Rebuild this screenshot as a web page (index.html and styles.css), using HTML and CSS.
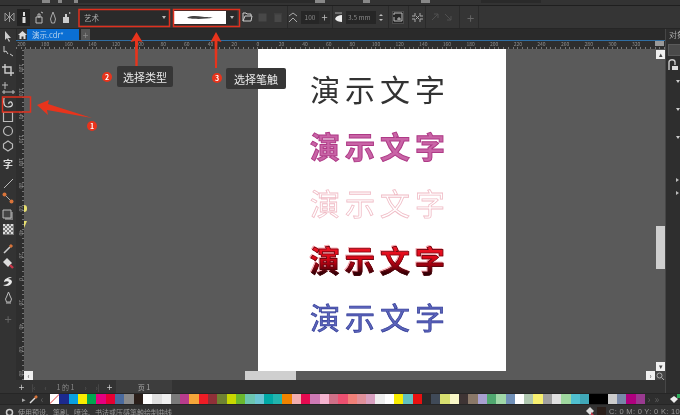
FILE: index.html
```html
<!DOCTYPE html>
<html lang="zh">
<head>
<meta charset="utf-8">
<title>演示.cdr</title>
<link rel="stylesheet" href="styles.css">
</head>
<body>
<div class="app">
  <div class="topstrip">
    <i class="frag lit w8"></i><i class="w8"></i><i class="frag lit w4"></i><i class="w12"></i><i class="frag lit w4"></i><i class="frag w237"></i><i class="frag lit w10"></i><i class="w38"></i><i class="frag lit w7"></i><i class="w51"></i><i class="frag lit w9"></i><i class="w51"></i><i class="frag w60"></i>
  </div>

  <div class="propbar">
    <svg class="pi" width="11" height="12" viewBox="0 0 11 12"><path d="M1 2v8l4-4zM10 2v8L6 6zM5.500 1v10" fill="none" stroke="#999"/></svg>
    <span class="activebtn ml2"><svg width="6" height="13" viewBox="0 0 6 13"><path d="M2 1h2v4H2zM1.500 6h3v6h-3z" fill="#ddd"/></svg></span>
    <svg class="pi ml5" width="9" height="13" viewBox="0 0 9 13"><path d="M1 6h6v6H1zM3 3h2v3H3zM6 1l2 1" fill="none" stroke="#bbb"/></svg>
    <svg class="pi ml5" width="8" height="13" viewBox="0 0 8 13"><path d="M4 1l1.500 4 1 3-1 4h-3l-1-4 1-3z" fill="none" stroke="#aaa"/></svg>
    <svg class="pi ml5" width="10" height="13" viewBox="0 0 10 13"><path d="M1 6h6v6H1zM3 3h2v3H3z" fill="#ccc"/><path d="M7 1l2 1-2 1z" fill="#ccc"/></svg>
    <div class="combo type ml7"><span>艺术</span><i class="caret"></i></div>
    <div class="combo stroke ml4">
      <span class="swatch"><svg width="26" height="5" viewBox="0 0 30 5"><path d="M0 2.500C6 0 12 1 18 1.500S26 2 30 2.500C24 4 14 4.500 8 4S2 3.500 0 2.500z" fill="#444"/></svg></span><i class="caret"></i>
    </div>
    <svg class="pi ml5" width="11" height="10" viewBox="0 0 11 10"><path d="M1 9V1h3l1 1h4v2M1 9h8l1-5H3z" fill="none" stroke="#ccc"/></svg>
    <svg class="pi ml5" width="9" height="9" viewBox="0 0 9 9"><path d="M.5.500h8v8h-8z" fill="#484848"/></svg>
    <svg class="pi ml7" width="8" height="9" viewBox="0 0 8 9"><path d="M1 2h6v7H1zM0 1h8" fill="#484848" stroke="#484848"/></svg>
    <i class="vsep ml5"></i>
    <svg class="pi" width="10" height="11" viewBox="0 0 10 11"><path d="M1 4l4-3 4 3M1 10l4-4 4 4" fill="none" stroke="#aaa"/></svg>
    <span class="field w18 ml3">100</span>
    <span class="plusbox">+</span>
    <i class="vsep ml2"></i>
    <svg class="pi ml1" width="9" height="11" viewBox="0 0 9 11"><path d="M1 1h7" stroke="#aaa"/><path d="M1 7c1-3 4-4 7-4v7C5 10 2 9 1 7z" fill="#eee"/></svg>
    <span class="field w30 left ml3">3.5 mm</span>
    <span class="spin ml1"><i class="up"></i><i class="down"></i></span>
    <i class="vsep ml3"></i>
    <span class="boxicon ml3"><svg width="10" height="10" viewBox="0 0 10 10"><path d="M1 3V1h8v8H1V5M4 7h4M6 5v3" fill="none" stroke="#bbb"/></svg></span>
    <i class="vsep ml4"></i>
    <svg class="pi ml3" width="11" height="11" viewBox="0 0 11 11"><path d="M3 1v3H0M8 1v3h3M3 10V7H0M8 10V7h3M4 4l3 3M7 4L4 7" fill="none" stroke="#aaa"/></svg>
    <i class="vsep ml2"></i>
    <svg class="pi ml5" width="8" height="8" viewBox="0 0 8 8"><path d="M1 7l6-6M3 1h4v4" fill="none" stroke="#505050"/></svg>
    <svg class="pi ml5" width="8" height="8" viewBox="0 0 8 8"><path d="M1 1l6 6M7 3v4H3" fill="none" stroke="#505050"/></svg>
    <i class="vsep ml7"></i>
    <span class="dimplus ml6">+</span>
    <i class="vsep ml3"></i>
  </div>

  <div class="body">
    <nav class="tools">
      <div class="tool"><svg width="9" height="11" viewBox="0 0 9 11"><path d="M1 0v9l2-2 2 4 1-1-2-3h3z" fill="#ccc"/></svg></div>
      <div class="tool mt2"><svg width="12" height="12" viewBox="0 0 12 12"><path d="M2 0v6l2-1 2 3M8 8l3 2" fill="none" stroke="#ccc"/></svg></div>
      <div class="tool mt4"><svg width="12" height="12" viewBox="0 0 12 12"><path d="M3 0v9h9M0 3h9v9" fill="none" stroke="#ccc" stroke-width="1.400"/></svg></div>
      <div class="tool mt4"><svg width="13" height="12" viewBox="0 0 13 12"><path d="M3 0v7M0 3h6M0 10h13M2 8v4M11 8v4" fill="none" stroke="#bbb"/></svg></div>
      <div class="tool mt1"><svg width="12" height="12" viewBox="0 0 12 12"><path d="M2 1c-1 5 0 9 4 9s5-2 4-4-4-1-3 1" fill="none" stroke="#ddd" stroke-width="1.200"/></svg></div>
      <div class="tool"><svg width="12" height="12" viewBox="0 0 12 12"><path d="M1.500 1.500h9v9h-9z" fill="none" stroke="#bbb" stroke-width="1.200"/></svg></div>
      <div class="tool"><svg width="12" height="12" viewBox="0 0 12 12"><circle cx="6" cy="6" r="4.500" fill="none" stroke="#bbb" stroke-width="1.200"/></svg></div>
      <div class="tool mt1"><svg width="12" height="12" viewBox="0 0 12 12"><path d="M6 1l4.500 3v4L6 11 1.500 8V4z" fill="none" stroke="#bbb" stroke-width="1.200"/></svg></div>
      <div class="tool mt4 glyph">字</div>
      <div class="tool mt5"><svg width="11" height="11" viewBox="0 0 11 11"><path d="M1 10l9-9" stroke="#bbb"/></svg></div>
      <div class="tool mt1"><svg width="12" height="12" viewBox="0 0 12 12"><path d="M2 2l8 8" stroke="#aaa"/><circle cx="2.500" cy="2.500" r="2" fill="#d9743a"/><circle cx="9.500" cy="9.500" r="2" fill="#d9743a"/></svg></div>
      <div class="tool mt3"><svg width="12" height="12" viewBox="0 0 12 12"><path d="M3 3h8v8H3z" fill="#777"/><path d="M1 1h8v8H1z" fill="#444" stroke="#bbb"/></svg></div>
      <div class="tool"><svg width="11" height="11" viewBox="0 0 11 11"><path d="M0 0h11v11H0z" fill="#777"/><path d="M0 0h2v2H0zM4 0h2v2H4zM8 0h2v2H8zM2 2h2v2H2zM6 2h2v2H6zM0 4h2v2H0zM4 4h2v2H4zM8 4h2v2H8zM2 6h2v2H2zM6 6h2v2H6zM0 8h2v2H0zM4 8h2v2H4zM8 8h2v2H8z" fill="#ddd"/></svg></div>
      <div class="tool mt5"><svg width="11" height="11" viewBox="0 0 11 11"><path d="M1 10l6-6" stroke="#ccc" stroke-width="1.600"/><path d="M7 4l2-2" stroke="#d9743a" stroke-width="3"/></svg></div>
      <div class="tool mt1"><svg width="12" height="12" viewBox="0 0 12 12"><path d="M5 1l5 5-4 4-5-5z" fill="#ddd"/><path d="M8 8l3 3" stroke="#c8374a" stroke-width="2.400"/></svg></div>
      <div class="tool mt5"><svg width="12" height="12" viewBox="0 0 12 12"><path d="M10 1C6 1 2 3 2 6c2-1 4-1 5 0-1 2-3 3-6 3 3 2 8 1 9-3 0-2-2-3-4-3z" fill="#e8e8e8"/></svg></div>
      <div class="tool mt2"><svg width="9" height="12" viewBox="0 0 9 12"><path d="M4.500 0l2 5 1 2-1 3h-4l-1-3 1-2zM2 11h5" fill="none" stroke="#bbb"/></svg></div>
      <div class="tool mt6 addtool">+</div>
    </nav>

    <div class="center">
      <div class="tabs">
        <span class="home"><svg width="9" height="8" viewBox="0 0 9 8"><path d="M4.500 0L9 4H7.500v4H5.500V5.500h-2V8H1.500V4H0z" fill="#ddd"/></svg></span>
        <span class="tab">演示.cdr*</span>
        <span class="tabadd">+</span>
      </div>
      <div class="hruler">
        <span>200</span><span>180</span><span>160</span><span>140</span><span>120</span><span>100</span><span>80</span><span>60</span><span>40</span><span>20</span><span>0</span><span>20</span><span>40</span><span>60</span><span>80</span><span>100</span><span>120</span><span>140</span><span>160</span><span>180</span><span>200</span><span>220</span><span>240</span><span>260</span><span>280</span><span>300</span><span>320</span>
        <i class="rulercorner"></i>
      </div>
      <div class="workspace">
        <div class="vruler">
          <span>180</span><span>160</span><span>140</span><span>120</span><span>100</span><span>80</span><span>60</span><span>40</span><span>20</span><span>0</span><span>20</span><span>40</span><span>60</span><span>80</span>
        </div>
        <div class="canvas">
          <div class="page">
            <div class="word plain">演示文字</div>
            <div class="word pink">演示文字</div>
            <div class="word pale">演示文字</div>
            <div class="word red">演示文字</div>
            <div class="word blue">演示文字</div>
          </div>
          <i class="guide g1"></i><i class="guide g2"></i>
          <div class="vscroll">
            <span class="sbtn">▴</span>
            <span class="vthumb"></span>
            <span class="sbtn">▾</span>
          </div>
          <div class="hscroll">
            <span class="sbtn">‹</span>
            <span class="hthumb"></span>
            <span class="sbtn">›</span>
            <span class="zoomcorner"><svg width="8" height="8" viewBox="0 0 8 8"><circle cx="3.500" cy="3.500" r="2.500" fill="none" stroke="#aaa"/><path d="M5.500 5.500L8 8" stroke="#aaa"/></svg></span>
          </div>
        </div>
      </div>
      <div class="pagebar">
        <span class="pb plus">+</span><span class="pb dim">|‹</span><span class="pb dim">‹</span><span class="pb count">1 的 1</span><span class="pb dim">›</span><span class="pb dim">›|</span><span class="pb plus">+</span>
        <span class="pagetab">页 1</span>
      </div>
    </div>

    <aside class="docker">
      <div class="dockertitle">对象</div>
      <div class="dockerbtn"></div>
      <svg class="dockerlock" width="11" height="12" viewBox="0 0 11 12"><path d="M2 11V3c0-3 6-3 6 0v3" fill="none" stroke="#ccc" stroke-width="1.400"/><path d="M5 7h6v4H5z" fill="#ddd"/></svg>
      <i class="tri down t1"></i>
      <i class="tri down t2"></i>
      <i class="tri down t3"></i>
      <i class="tri right t4"></i>
      <i class="tri right t5"></i>
    </aside>
  </div>

  <div class="palette">
    <span class="palctl">▸</span>
    <svg class="paldrop" width="9" height="9" viewBox="0 0 9 9"><path d="M1 8l5-5" stroke="#ddd" stroke-width="1.500"/><path d="M6 3l2-2" stroke="#d9743a" stroke-width="2.500"/></svg>
    <span class="palctl dim">‹</span>
    <div class="swatches">
      <i class="none"></i><i style="background:#1c2a8f"></i><i style="background:#0aa0e0"></i><i style="background:#f8ec00"></i><i style="background:#00a651"></i><i style="background:#e5007f"></i><i style="background:#e60033"></i><i style="background:#4a6a9e"></i><i style="background:#8a8a8a"></i><i style="background:#2b1f1a"></i><i style="background:#fff"></i><i style="background:#e0e0e0"></i><i style="background:#f0f0f0"></i><i style="background:#7a7a7a"></i><i style="background:#b83c8c"></i><i style="background:#f5a63a"></i><i style="background:#ee1c25"></i><i style="background:#8f3038"></i><i style="background:#6f8232"></i><i style="background:#c9d800"></i><i style="background:#6ab82e"></i><i style="background:#6cc5b0"></i><i style="background:#6cc5d4"></i><i style="background:#00a9a5"></i><i style="background:#22b5ae"></i><i style="background:#f08300"></i><i style="background:#f2aeb0"></i><i style="background:#e60a50"></i><i style="background:#cf7ab5"></i><i style="background:#f5b3cf"></i><i style="background:#d07088"></i><i style="background:#ec5070"></i><i style="background:#f08078"></i><i style="background:#e0909a"></i><i style="background:#d8a0c0"></i><i style="background:#eee"></i><i style="background:#fff"></i><i style="background:#f8ec00"></i><i style="background:#60c0c0"></i><i style="background:#e81010"></i><i style="background:#2a2a2a"></i><i style="background:#404a58"></i><i style="background:#d8e070"></i><i style="background:#faf8c8"></i><i style="background:#3e3434"></i><i style="background:#8a7868"></i><i style="background:#a8a0d0"></i><i style="background:#50a870"></i><i style="background:#a0d8a8"></i><i style="background:#7090b8"></i><i style="background:#fff"></i><i style="background:#b0c8b0"></i><i style="background:#f8f070"></i><i style="background:#a0a0a0"></i><i style="background:#e0e0e0"></i><i style="background:#a0d8a0"></i><i style="background:#50c0d0"></i><i style="background:#40a8b8"></i><i style="background:#000"></i><i style="background:#000"></i><i style="background:#ccc"></i><i style="background:#7888a8"></i><i style="background:#b0007f"></i><i style="background:#9a3a90"></i>
    </div>
    <span class="palctl dim">›</span><span class="palctl dim">»</span>
    <svg class="palfill" width="12" height="10" viewBox="0 0 12 10"><path d="M1 5l4-3 4 3-4 4z" fill="#eee"/><path d="M8 0h4v4H8z" fill="#2fae5c"/></svg>
  </div>

  <footer class="status">
    <svg class="gear" width="9" height="9" viewBox="0 0 9 9"><circle cx="4.500" cy="4.500" r="3" fill="none" stroke="#ccc" stroke-width="1.500"/></svg>
    <span class="hint">使用预设、笔刷、喷涂、书法或压感笔触绘制曲线</span>
    <span class="fillinfo">
      <svg class="pi" width="8" height="8" viewBox="0 0 8 8"><path d="M4 0l4 4-4 4-4-4z" fill="#ddd"/><path d="M5 5l3 3H5z" fill="#c8374a"/></svg>
      <i class="fillchip"></i>
      <span>C: 0 M: 0 Y: 0 K: 100</span>
    </span>
  </footer>

  <svg class="marks" width="680" height="415" viewBox="0 0 680 415">
    <g fill="none" stroke="#e0301e" stroke-width="1.500">
      <rect x="2.500" y="97" width="28" height="15"/>
      <rect x="79" y="9.500" width="90.500" height="17"/>
      <rect x="173.500" y="9.500" width="66" height="17"/>
    </g>
    <g fill="#e8341c">
      <path d="M37 105l12-5-1 4L92 118l-45-8 1 5z"/>
      <path d="M136.500 32l6 10-4.500-1-.4 28h-2.200l-.4-28-4.500 1z"/>
      <path d="M216 32l5.500 10-4-1-.5 27h-2l-.5-27-4 1z"/>
      <circle cx="92" cy="126" r="5"/>
      <circle cx="107" cy="77" r="5"/>
      <circle cx="217" cy="78" r="5"/>
    </g>
  </svg>
  <span class="badge b1">1</span>
  <span class="badge b2">2</span>
  <span class="badge b3">3</span>
  <span class="callout c2">选择类型</span>
  <span class="callout c3">选择笔触</span>
</div>
</body>
</html>
```

FILE: styles.css
```css
* { box-sizing: border-box; }
html, body { margin: 0; padding: 0; background: #333; }
i { display: block; font-style: normal; }

.app {
  position: relative;
  width: 680px;
  height: 415px;
  display: flex;
  flex-direction: column;
  overflow: hidden;
  background: #333;
  font-family: "Noto Sans CJK SC", "Liberation Sans", sans-serif;
  color: #aaa;
  filter: blur(0.35px);
}

/* cut-off row above the property bar */
.topstrip {
  height: 6px;
  flex: none;
  display: flex;
  padding: 0 0 2px 42px;
  background: #333;
  border-bottom: 1px solid #1f1f1f;
}
.topstrip i { height: 3px; flex: none; }
.frag { background: #2a2a2a; }
.frag.lit { background: #888; }
.w4 { width: 4px; } .w7 { width: 7px; } .w8 { width: 8px; } .w9 { width: 9px; }
.w10 { width: 10px; } .w12 { width: 12px; } .w38 { width: 38px; } .w51 { width: 51px; }
.w60 { width: 60px; } .w237 { width: 237px; }

/* property bar */
.propbar {
  height: 23px;
  flex: none;
  display: flex;
  align-items: center;
  padding: 0 0 0 4px;
  background: #353535;
  border-bottom: 1px solid #262626;
}
.pi { flex: none; }
.ml1 { margin-left: 1px; } .ml2 { margin-left: 2px; } .ml3 { margin-left: 3px; }
.ml4 { margin-left: 4px; } .ml5 { margin-left: 5px; } .ml6 { margin-left: 6px; }
.ml7 { margin-left: 7px; }
.activebtn {
  width: 13px; height: 17px;
  flex: none;
  display: flex; align-items: center; justify-content: center;
  background: #222;
}
.combo {
  height: 15px;
  display: flex;
  align-items: center;
  background: #2a2a2a;
  flex: none;
}
.combo.type { width: 90px; padding: 0 3px 0 5px; justify-content: space-between; font-size: 7.500px; color: #aaa; }
.combo.stroke { width: 64px; padding: 1px 0 1px 1px; }
.swatch { width: 52px; height: 13px; background: #fff; display: flex; align-items: center; justify-content: center; }
.combo.stroke .caret { margin-left: 4px; }
.caret { width: 0; height: 0; border: 2.500px solid transparent; border-top: 3px solid #bbb; border-bottom: 0; }
.vsep { width: 1px; height: 22px; background: #2a2a2a; flex: none; }
.field {
  height: 13px;
  display: flex; align-items: center; justify-content: center;
  background: #262626; color: #888;
  font-size: 6.500px;
  flex: none;
}
.w18 { width: 18px; } .w30 { width: 30px; }
.field.left { justify-content: flex-start; padding-left: 2px; }
.plusbox {
  width: 11px; height: 13px;
  flex: none;
  display: flex; align-items: center; justify-content: center;
  background: #2c2c2c; color: #bbb; font-size: 11px; line-height: 1;
}
.spin { width: 8px; height: 13px; flex: none; display: flex; flex-direction: column; align-items: center; justify-content: center; gap: 3px; }
.up { border: 2px solid transparent; border-bottom: 2px solid #bbb; border-top: 0; }
.down { border: 2px solid transparent; border-top: 2px solid #bbb; border-bottom: 0; }
.boxicon { width: 12px; height: 13px; flex: none; display: flex; align-items: center; justify-content: center; background: #262626; border: 1px solid #4a4a4a; }
.dimplus { width: 9px; flex: none; color: #666; font-size: 13px; line-height: 1; text-align: center; }

/* body */
.body { flex: 1; min-height: 0; display: flex; }

.tools {
  width: 16px;
  flex: none;
  display: flex;
  flex-direction: column;
  background: #333;
}
.tool {
  height: 14px;
  flex: none;
  display: flex;
  align-items: center;
  justify-content: center;
}
.mt1 { margin-top: 1px; } .mt2 { margin-top: 2px; } .mt3 { margin-top: 3px; }
.mt4 { margin-top: 4px; } .mt5 { margin-top: 5px; } .mt6 { margin-top: 6px; }
.glyph { color: #ddd; font-size: 10px; font-weight: 700; line-height: 1; }
.addtool { color: #666; font-size: 13px; line-height: 1; }

.center { flex: 1; min-width: 0; display: flex; flex-direction: column; }

.tabs {
  height: 12px;
  flex: none;
  display: flex;
  align-items: stretch;
  padding-left: 1px;
  background: #2a2a2a;
  border-bottom: 1px solid #2f6ea3;
}
.home { width: 10px; display: flex; align-items: center; justify-content: center; background: #333; }
.tab { width: 52px; display: flex; align-items: center; padding-left: 5px; background: #0b6fd4; color: #b9d4ee; font-size: 7.500px; line-height: 1; }
.tabadd { width: 9px; margin-left: 2px; display: flex; align-items: center; justify-content: center; background: #555; color: #888; font-size: 10px; line-height: 1; }

.hruler {
  position: relative;
  height: 8px;
  flex: none;
  display: flex;
  overflow: hidden;
  background-color: #2e2e2e;
  background-image: repeating-linear-gradient(90deg, #777 0 1px, transparent 1px 4.730px);
  background-size: 100% 2px;
  background-position: 0 100%;
  background-repeat: no-repeat;
  color: #8e8e8e;
  font-size: 5px;
  line-height: 6px;
}
.hruler span { width: 23.650px; flex: none; text-align: center; }
.hruler span:first-child { margin-left: -6.450px; }
.rulercorner { position: absolute; right: 1px; top: 0; width: 9px; height: 5px; background: #999; }

.workspace { flex: 1; min-height: 0; display: flex; }

.vruler {
  width: 8px;
  flex: none;
  display: flex;
  flex-direction: column;
  padding-top: 7.500px;
  overflow: hidden;
  background-color: #2e2e2e;
  background-image: repeating-linear-gradient(0deg, #777 0 1px, transparent 1px 4.700px);
  background-size: 2px 100%;
  background-position: 100% 0;
  background-repeat: no-repeat;
  color: #8e8e8e;
  font-size: 5px;
}
.vruler span { height: 23.500px; flex: none; writing-mode: vertical-rl; text-align: center; line-height: 6px; }

.canvas {
  position: relative;
  flex: 1;
  min-width: 0;
  padding-left: 234px;
  background: #5a5a5a;
}
.page {
  width: 248px;
  height: 322px;
  padding: 11px 0 0 52px;
  background: #fff;
}
.word {
  height: 57px;
  font-size: 30px;
  line-height: 57px;
  letter-spacing: 5px;
  white-space: nowrap;
}
.plain { color: #333; font-weight: 400; }
.pink { color: #c964a6; font-weight: 700; -webkit-text-stroke: 1px #ae3a86; }
.pale { color: #fff; font-weight: 400; -webkit-text-stroke: .8px #f0bcc6; }
.red {
  font-weight: 700;
  color: transparent;
  background: linear-gradient(180deg, #f01828 25%, #e00818 46%, #90000e 62%, #300006 75%);
  -webkit-background-clip: text;
  background-clip: text;
  -webkit-text-stroke: .6px #4a0008;
  filter: drop-shadow(-1px -1px 0 #f7a8b0);
}
.blue { color: #5c64ba; font-weight: 400; -webkit-text-stroke: .7px #2f3a96; }

.guide { position: absolute; left: 0; width: 3px; height: 7px; background: #e8e070; }
.g1 { top: 156px; border-radius: 0 4px 4px 0; }
.g2 { top: 172px; clip-path: polygon(0 0, 100% 0, 0 100%); }

.vscroll {
  position: absolute;
  right: 0;
  top: 0;
  bottom: 9px;
  width: 9px;
  padding-top: 1px;
  display: flex;
  flex-direction: column;
  background: #5a5a5a;
}
.sbtn {
  width: 9px; height: 9px;
  flex: none;
  display: flex; align-items: center; justify-content: center;
  background: #f0f0f0; color: #444;
  font-size: 7px; line-height: 1;
}
.vthumb { width: 9px; height: 43px; margin: 167px 0 auto; background: #cfcfcf; }
.hscroll {
  position: absolute;
  left: 0; right: 0; bottom: 0;
  height: 9px;
  display: flex;
  background: #5a5a5a;
}
.hthumb { width: 51px; height: 9px; margin: 0 auto 0 212px; background: #cfcfcf; }
.zoomcorner { width: 10px; height: 9px; display: flex; align-items: center; justify-content: center; background: #444; }

.pagebar {
  height: 13px;
  flex: none;
  display: flex;
  align-items: center;
  background: #333;
  font-size: 7px;
  color: #8a8a8a;
}
.pb { flex: none; text-align: center; width: 11px; margin-right: 1px; }
.pb.plus { color: #ccc; font-size: 10px; line-height: 1; }
.pb.dim { color: #5e5e5e; }
.pb.count { width: 27px; }
.pagetab { width: 56px; height: 13px; display: flex; align-items: center; justify-content: center; background: #3d3d3d; color: #aaa; }

.docker {
  width: 15px;
  flex: none;
  display: flex;
  flex-direction: column;
  background: #2e2e2e;
  border-left: 1px solid #464646;
}
.dockertitle { height: 14px; padding-left: 3px; font-size: 8px; line-height: 11px; color: #aaa; white-space: nowrap; }
.dockerbtn { width: 13px; height: 12px; margin: 1px 0 0 2px; background: #4a4a4a; border: 1px solid #5a5a5a; }
.dockerlock { margin: 3px 0 0 1px; }
.tri { width: 0; height: 0; margin-left: 10px; border-style: solid; border-color: transparent; }
.tri.down { border-width: 3px 2.500px 0; border-top-color: #ccc; }
.tri.right { border-width: 2.500px 0 2.500px 3px; border-left-color: #bbb; }
.t1 { margin-top: 9px; } .t2 { margin-top: 25px; } .t3 { margin-top: 25px; }
.t4 { margin-top: 39px; } .t5 { margin-top: 9px; }

.palette {
  height: 12px;
  flex: none;
  display: flex;
  align-items: center;
  padding-left: 20px;
  background: #2e2e2e;
  border-top: 1px solid #262626;
  border-bottom: 1px solid #262626;
}
.palctl { width: 8px; flex: none; text-align: center; font-size: 7px; color: #aaa; line-height: 1; }
.palctl.dim { color: #5e5e5e; font-size: 10px; }
.paldrop { margin-left: 1px; flex: none; }
.swatches { display: flex; margin-left: 4px; flex: none; height: 10px; }
.swatches i { width: 9.310px; height: 10px; flex: none; }
.swatches .none { background: linear-gradient(135deg, #fff 45%, #d33 50%, #fff 55%); }
.palfill { margin-left: 8px; flex: none; }

.status {
  height: 10px;
  flex: none;
  display: flex;
  align-items: flex-start;
  padding: 2px 0 0 5px;
  overflow: hidden;
  background: #333;
  font-size: 7px;
  line-height: 10px;
  color: #999;
}
.hint { margin-left: 4px; white-space: nowrap; }
.fillinfo { margin-left: auto; display: flex; align-items: flex-start; gap: 3px; white-space: nowrap; width: 94px; flex: none; font-family: "Liberation Sans", sans-serif; font-size: 7.500px; letter-spacing: .3px; }
.fillchip { width: 9px; height: 9px; flex: none; background: #2b1f1a; }
.gear { margin-top: 1px; flex: none; }

/* annotations drawn on top of the screenshot */
.marks { position: absolute; left: 0; top: 0; pointer-events: none; }
.badge { position: absolute; width: 10px; height: 10px; display: flex; align-items: center; justify-content: center; color: #fff; font-size: 7px; font-weight: 700; line-height: 1; }
.b1 { left: 87px; top: 121px; }
.b2 { left: 102px; top: 72px; }
.b3 { left: 212px; top: 73px; }
.callout { position: absolute; height: 21px; display: flex; align-items: center; justify-content: center; background: #363636; color: #e8e8e8; font-size: 11px; border-radius: 2px; }
.c2 { left: 117px; top: 66px; width: 56px; }
.c3 { left: 226px; top: 68px; width: 60px; }
```
